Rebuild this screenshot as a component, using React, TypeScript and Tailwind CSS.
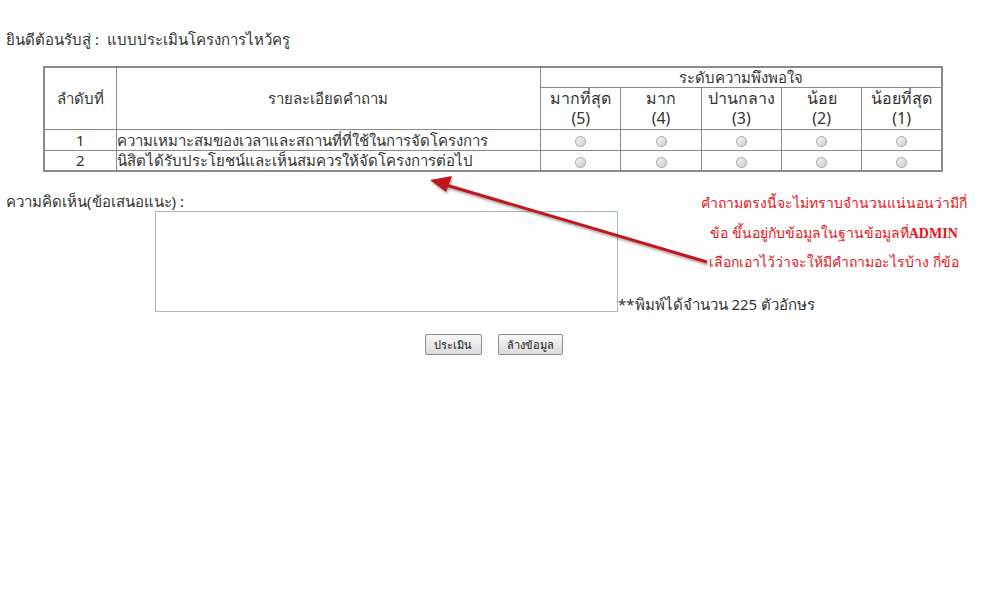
import React from 'react';

const levels = [
  { label: 'มากที่สุด', score: 5 },
  { label: 'มาก', score: 4 },
  { label: 'ปานกลาง', score: 3 },
  { label: 'น้อย', score: 2 },
  { label: 'น้อยที่สุด', score: 1 },
];

const questions = [
  'ความเหมาะสมของเวลาและสถานที่ที่ใช้ในการจัดโครงการ',
  'นิสิตได้รับประโยชน์และเห็นสมควรให้จัดโครงการต่อไป',
];

const Radio: React.FC = () => (
  <span className="inline-block w-[11px] h-[11px] rounded-full border border-[#a6a6a6] bg-gradient-to-br from-[#f4f4f4] to-[#cfcfcf] align-middle" />
);

const cell = 'border border-[#8a8a8a] p-0';

export default function App() {
  return (
    <div className="relative w-[983px] h-[592px] bg-white text-[#333] text-[15px] font-['Tahoma','Noto_Sans','DejaVu_Sans',sans-serif]">
      <div className="pt-[29px] pl-[6px] leading-[20px]">ยินดีต้อนรับสู่ :&nbsp; แบบประเมินโครงการไหว้ครู</div>

      <table className="mt-[17px] ml-[43px] w-[900px] border-collapse border-2 border-[#8a8a8a] text-center leading-[18px]">
        <thead>
          <tr className="h-[20px]">
            <th rowSpan={2} className={`${cell} w-[72px] font-normal`}>ลำดับที่</th>
            <th rowSpan={2} className={`${cell} w-[423px] font-normal`}>รายละเอียดคำถาม</th>
            <th colSpan={5} className={`${cell} font-normal`}>ระดับความพึงพอใจ</th>
          </tr>
          <tr className="h-[42px]">
            {levels.map((l) => (
              <th key={l.score} className={`${cell} w-[80px] font-normal text-[16px] leading-[20px]`}>
                <div>{l.label}</div>
                <div>({l.score})</div>
              </th>
            ))}
          </tr>
        </thead>
        <tbody>
          {questions.map((q, i) => (
            <tr key={i} className="h-[21px]">
              <td className={cell}>{i + 1}</td>
              <td className={`${cell} text-left whitespace-nowrap`}>{q}</td>
              {levels.map((l) => (
                <td key={l.score} className={cell}>
                  <Radio />
                </td>
              ))}
            </tr>
          ))}
        </tbody>
      </table>

      <div className="mt-[19px] pl-[6px] leading-[20px]">ความคิดเห็น(ข้อเสนอแนะ) :</div>
      <div className="flex items-end pl-[155px]">
        <div className="w-[463px] h-[101px] border border-[#a9bccd] bg-white" />
        <span className="leading-[18px] mb-[-1px]">**พิมพ์ได้จำนวน 225 ตัวอักษร</span>
      </div>

      <div className="flex justify-center gap-[16px] mt-[22px] pl-[4px]">
        <button className="h-[21px] w-[57px] border border-[#8c8c8c] rounded-[2px] bg-gradient-to-b from-[#f7f7f7] to-[#dcdcdc] text-[11px] text-[#222] leading-none">ประเมิน</button>
        <button className="h-[21px] w-[65px] border border-[#8c8c8c] rounded-[2px] bg-gradient-to-b from-[#f7f7f7] to-[#dcdcdc] text-[11px] text-[#222] leading-none">ล้างข้อมูล</button>
      </div>

      <svg className="absolute left-0 top-0 pointer-events-none" width="983" height="592">
        <defs>
          <filter id="sh" x="-10%" y="-10%" width="120%" height="120%">
            <feDropShadow dx="1" dy="2" stdDeviation="1.2" floodColor="#000" floodOpacity="0.35" />
          </filter>
        </defs>
        <g filter="url(#sh)">
          <line x1="707" y1="262" x2="446" y2="185" stroke="#c0161b" strokeWidth="3" />
          <polygon points="430,180 452,176 446,192" fill="#c0161b" />
        </g>
      </svg>

      <div className="absolute left-[699px] top-[189px] w-[270px] text-center text-[#e8141b] text-[14px] leading-[30px] font-['Liberation_Serif','Tahoma',serif]">
        <div>คำถามตรงนี้จะไม่ทราบจำนวนแน่นอนว่ามีกี่</div>
        <div className="leading-[30px]">ข้อ ขึ้นอยู่กับข้อมูลในฐานข้อมูลที่<b>ADMIN</b></div>
        <div className="leading-[28px]">เลือกเอาไว้ว่าจะให้มีคำถามอะไรบ้าง กี่ข้อ</div>
      </div>
    </div>
  );
}
